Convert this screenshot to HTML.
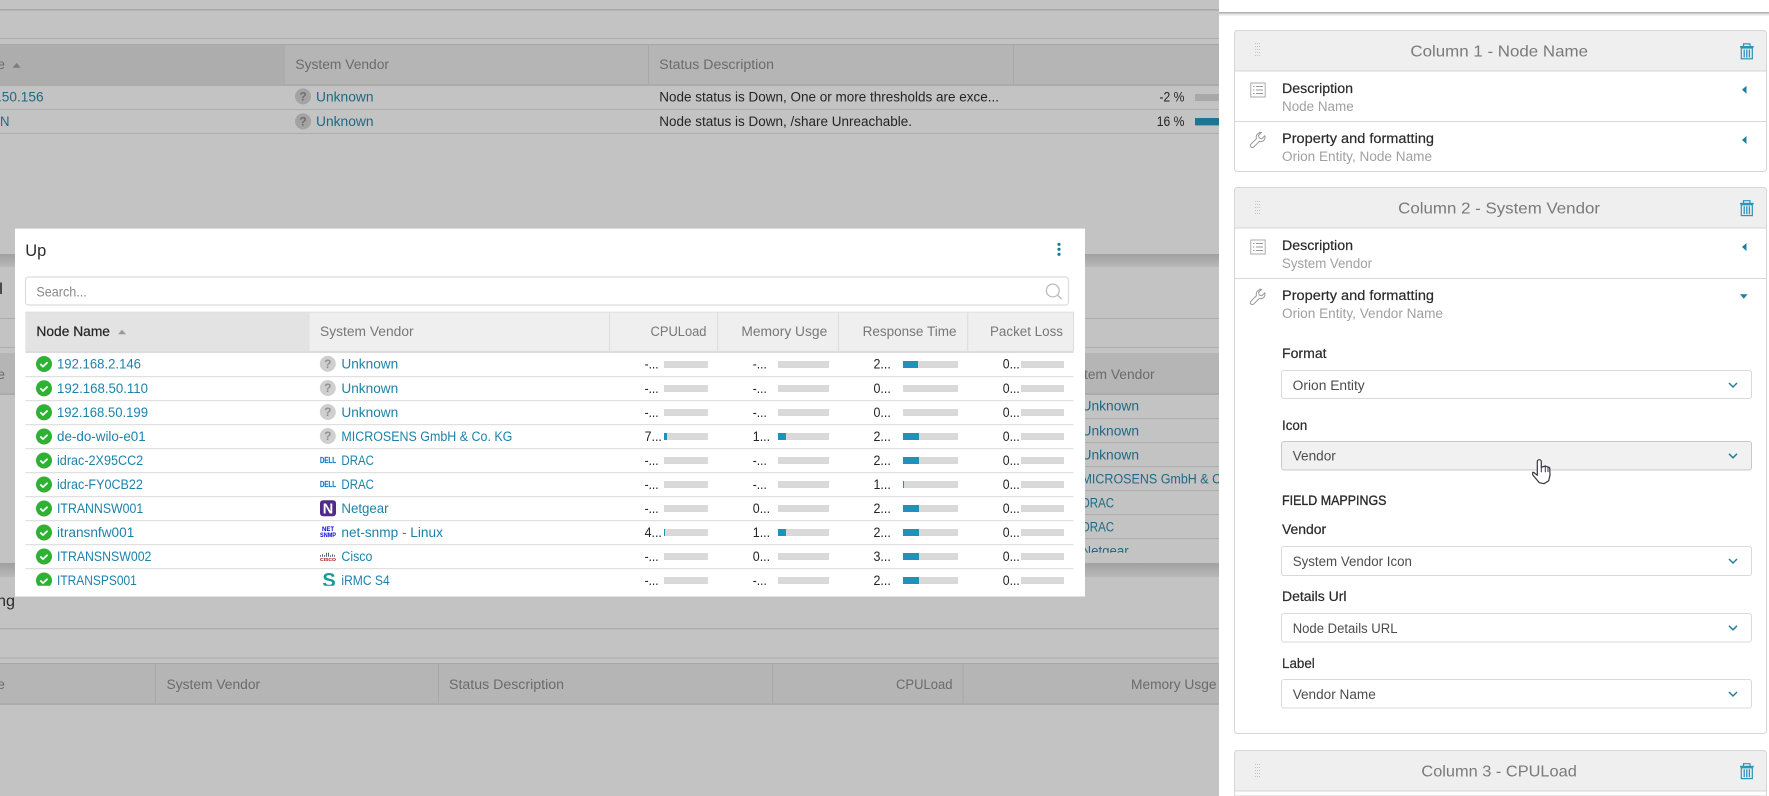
<!DOCTYPE html>
<html><head><meta charset="utf-8"><title>Up</title>
<style>
html,body{margin:0;padding:0;background:#c3c3c3;width:1769px;height:796px;overflow:hidden}
svg{display:block;position:absolute;left:0;top:0}
text{font-family:"Liberation Sans",sans-serif;font-size:13.5px}
.h{fill:#6b6b6b}.bl{fill:#1d6a85}.bt{fill:#242424}
.dh{fill:#777}.l{fill:#1d82aa}.n{fill:#2a2a2a;stroke:#2a2a2a;stroke-width:.2px}.k{fill:#242424}.s{fill:#a0a0a0}.o{fill:#4d4d4d}.t{font-size:15.8px;fill:#7a7a7a}
.q{font-weight:700;font-size:12px;text-anchor:middle}
</style></head><body>
<svg width="1769" height="796" viewBox="0 0 1769 796" xmlns="http://www.w3.org/2000/svg">
<rect width="1769" height="796" fill="#c3c3c3"/>
<!-- background: top widget -->
<rect x="0" y="9" width="1219" height="1.6" fill="#a9a9a9"/>
<rect x="0" y="38" width="1219" height="1" fill="#adadad"/>
<rect x="0" y="44" width="1219" height="40" fill="#b5b5b5"/>
<rect x="0" y="44" width="285" height="40" fill="#adadad"/>
<rect x="0" y="44" width="1219" height="1" fill="#a8a8a8"/>
<rect x="0" y="84" width="1219" height="2" fill="#ababab"/>
<rect x="648" y="44" width="1" height="40" fill="#a8a8a8"/>
<rect x="1013" y="44" width="1" height="40" fill="#a8a8a8"/>
<text class="h" x="-3" y="69" textLength="8" lengthAdjust="spacingAndGlyphs">e</text>
<path d="M12.6 67.7h8l-4-4.7z" fill="#7d7d7d"/>
<text class="h" x="295.4" y="69" textLength="93.6" lengthAdjust="spacingAndGlyphs">System Vendor</text>
<text class="h" x="659.3" y="69" textLength="114.7" lengthAdjust="spacingAndGlyphs">Status Description</text>
<text class="bl" x="-2" y="101.4" textLength="45.6" lengthAdjust="spacingAndGlyphs">.50.156</text>
<circle cx="303" cy="96.4" r="8" fill="#a3a3a3"/><text class="q" x="303" y="100.6" fill="#707070">?</text>
<text class="bl" x="316" y="101.4" textLength="57.5" lengthAdjust="spacingAndGlyphs">Unknown</text>
<text class="bt" x="659.3" y="101.4" textLength="339.7" lengthAdjust="spacingAndGlyphs">Node status is Down, One or more thresholds are exce...</text>
<text class="bt" x="1159.5" y="101.4" textLength="24.9" lengthAdjust="spacingAndGlyphs">-2 %</text>
<rect x="1195" y="94" width="24" height="7" fill="#a8a8a8"/>
<rect x="0" y="109" width="1219" height="1" fill="#adadad"/>
<text class="bl" x="0" y="126.2" textLength="9.5" lengthAdjust="spacingAndGlyphs">N</text>
<circle cx="303" cy="121.4" r="8" fill="#a3a3a3"/><text class="q" x="303" y="125.6" fill="#707070">?</text>
<text class="bl" x="316" y="126.2" textLength="57.5" lengthAdjust="spacingAndGlyphs">Unknown</text>
<text class="bt" x="659.3" y="126.2" textLength="252.7" lengthAdjust="spacingAndGlyphs">Node status is Down, /share Unreachable.</text>
<text class="bt" x="1156.7" y="126.2" textLength="27.7" lengthAdjust="spacingAndGlyphs">16 %</text>
<rect x="1195" y="118" width="24" height="7.4" fill="#1c7693"/>
<rect x="0" y="133" width="1219" height="1" fill="#adadad"/>
<!-- background: middle widget -->
<defs><linearGradient id="b" x1="0" y1="0" x2="0" y2="1"><stop offset="0" stop-color="#a0a0a0"/><stop offset="1" stop-color="#b9b9b9"/></linearGradient></defs>
<rect x="0" y="254" width="1219" height="13" fill="url(#b)"/>
<text x="-1" y="294" style="font-size:16px" fill="#2a2a2a" textLength="4" lengthAdjust="spacingAndGlyphs">l</text>
<rect x="0" y="318" width="1219" height="1" fill="#adadad"/>
<rect x="0" y="347" width="1219" height="1" fill="#adadad"/>
<rect x="0" y="353" width="1219" height="40" fill="#b5b5b5"/>
<rect x="0" y="393" width="1219" height="2" fill="#ababab"/>
<text class="h" x="-3" y="379" textLength="8" lengthAdjust="spacingAndGlyphs">e</text>
<text class="h" x="1061" y="379" textLength="93.6" lengthAdjust="spacingAndGlyphs">System Vendor</text>
<text class="bl" x="1081.5" y="410.5" textLength="57.5" lengthAdjust="spacingAndGlyphs">Unknown</text>
<rect x="1085" y="418" width="134" height="1" fill="#adadad"/>
<text class="bl" x="1081.5" y="435.5" textLength="57.5" lengthAdjust="spacingAndGlyphs">Unknown</text>
<rect x="1085" y="442" width="134" height="1" fill="#adadad"/>
<text class="bl" x="1081.5" y="459.5" textLength="57.5" lengthAdjust="spacingAndGlyphs">Unknown</text>
<rect x="1085" y="466" width="134" height="1" fill="#adadad"/>
<text class="bl" x="1081.5" y="483.5" textLength="171.6" lengthAdjust="spacingAndGlyphs">MICROSENS GmbH &amp; Co. KG</text>
<rect x="1085" y="490" width="134" height="1" fill="#adadad"/>
<text class="bl" x="1081.5" y="507.5" textLength="32.6" lengthAdjust="spacingAndGlyphs">DRAC</text>
<rect x="1085" y="514" width="134" height="1" fill="#adadad"/>
<text class="bl" x="1081.5" y="531.5" textLength="32.6" lengthAdjust="spacingAndGlyphs">DRAC</text>
<rect x="1085" y="538" width="134" height="1" fill="#adadad"/>
<text class="bl" x="1081.5" y="555.5" textLength="47.2" lengthAdjust="spacingAndGlyphs">Netgear</text>
<rect x="1085" y="552.7" width="134" height="11" fill="#c3c3c3"/>
<rect x="0" y="563" width="1219" height="14" fill="url(#b)"/>
<!-- background: bottom widget -->
<text x="-3" y="606" style="font-size:16px" fill="#2a2a2a" textLength="18" lengthAdjust="spacingAndGlyphs">ng</text>
<rect x="0" y="628" width="1219" height="1.4" fill="#adadad"/>
<rect x="0" y="657.5" width="1219" height="1" fill="#adadad"/>
<rect x="0" y="663" width="1219" height="40" fill="#b5b5b5"/>
<rect x="0" y="663" width="1219" height="1" fill="#a8a8a8"/>
<rect x="0" y="703" width="1219" height="2" fill="#ababab"/>
<rect x="155" y="663" width="1" height="40" fill="#a8a8a8"/>
<rect x="438" y="663" width="1" height="40" fill="#a8a8a8"/>
<rect x="772" y="663" width="1" height="40" fill="#a8a8a8"/>
<rect x="962.5" y="663" width="1" height="40" fill="#a8a8a8"/>
<text class="h" x="-3" y="689" textLength="8" lengthAdjust="spacingAndGlyphs">e</text>
<text class="h" x="166.5" y="689" textLength="93.6" lengthAdjust="spacingAndGlyphs">System Vendor</text>
<text class="h" x="449" y="689" textLength="115" lengthAdjust="spacingAndGlyphs">Status Description</text>
<text class="h" x="896" y="689" textLength="56.5" lengthAdjust="spacingAndGlyphs">CPULoad</text>
<text class="h" x="1131" y="689" textLength="85.5" lengthAdjust="spacingAndGlyphs">Memory Usge</text>

<!-- dialog -->
<rect x="15" y="228.6" width="1070" height="368.4" fill="#fff"/>
<rect x="15" y="596" width="1070" height="1" fill="#e2e2e2"/>
<text x="25.3" y="256" style="font-size:16.5px" fill="#2b2b2b" textLength="21" lengthAdjust="spacingAndGlyphs">Up</text>
<circle cx="1059" cy="244.3" r="1.6" fill="#0f7ca0"/><circle cx="1059" cy="249.3" r="1.6" fill="#0f7ca0"/><circle cx="1059" cy="254.3" r="1.6" fill="#0f7ca0"/>
<rect x="25.5" y="277" width="1043" height="28" rx="3" fill="#fff" stroke="#dcdcdc" stroke-width="1.2"/>
<text x="36.4" y="296.3" fill="#8a8a8a" textLength="50.4" lengthAdjust="spacingAndGlyphs">Search...</text>
<circle cx="1052.8" cy="290.5" r="6.4" fill="none" stroke="#bcbcbc" stroke-width="1.3"/><path d="M1057.3 295l4.4 4" stroke="#bcbcbc" stroke-width="1.4" fill="none"/>
<rect x="25.4" y="311.7" width="1048.1" height="39.3" fill="#efefef"/>
<rect x="25.4" y="311.7" width="284.2" height="39.3" fill="#e3e3e3"/>
<rect x="25.4" y="311.7" width="1048.1" height="1" fill="#e0e0e0"/>
<rect x="25.4" y="351" width="1048.1" height="2" fill="#dcdcdc"/>
<rect x="309.4" y="312" width="1" height="39" fill="#ebebeb"/>
<rect x="609" y="312" width="1" height="39" fill="#dcdcdc"/>
<rect x="717.2" y="312" width="1" height="39" fill="#dcdcdc"/>
<rect x="838" y="312" width="1" height="39" fill="#dcdcdc"/>
<rect x="967.2" y="312" width="1" height="39" fill="#dcdcdc"/>
<rect x="1073" y="312" width="1" height="39" fill="#dcdcdc"/>
<text x="36.4" y="336" fill="#242424" stroke="#242424" stroke-width=".2" textLength="73.6" lengthAdjust="spacingAndGlyphs">Node Name</text>
<path d="M118 334.2h8l-4-4.6z" fill="#9a9a9a"/>
<text class="dh" x="320" y="336" textLength="93.6" lengthAdjust="spacingAndGlyphs">System Vendor</text>
<text class="dh" x="650.5" y="336" textLength="56" lengthAdjust="spacingAndGlyphs">CPULoad</text>
<text class="dh" x="741.4" y="336" textLength="85.9" lengthAdjust="spacingAndGlyphs">Memory Usge</text>
<text class="dh" x="862.6" y="336" textLength="93.9" lengthAdjust="spacingAndGlyphs">Response Time</text>
<text class="dh" x="990" y="336" textLength="73" lengthAdjust="spacingAndGlyphs">Packet Loss</text>

<!-- row separators -->
<g fill="#e0e0e0">
<rect x="25.4" y="376" width="1048.1" height="1.2"/><rect x="25.4" y="400" width="1048.1" height="1.2"/><rect x="25.4" y="424" width="1048.1" height="1.2"/><rect x="25.4" y="448" width="1048.1" height="1.2"/><rect x="25.4" y="472" width="1048.1" height="1.2"/><rect x="25.4" y="496" width="1048.1" height="1.2"/><rect x="25.4" y="520" width="1048.1" height="1.2"/><rect x="25.4" y="544" width="1048.1" height="1.2"/><rect x="25.4" y="568" width="1048.1" height="1.2"/>
</g>
<!-- status checks -->
<g fill="#2eb135">
<circle cx="44" cy="364" r="8"/><circle cx="44" cy="388.3" r="8"/><circle cx="44" cy="412.3" r="8"/><circle cx="44" cy="436.5" r="8"/><circle cx="44" cy="460.5" r="8"/><circle cx="44" cy="484.5" r="8"/><circle cx="44" cy="508.5" r="8"/><circle cx="44" cy="532.5" r="8"/><circle cx="44" cy="556.5" r="8"/><circle cx="44" cy="580.5" r="8"/>
</g>
<g fill="none" stroke="#fff" stroke-width="1.7">
<path d="M40.3 364l2.7 2.6 4.6-4.4"/><path d="M40.3 388.3l2.7 2.6 4.6-4.4"/><path d="M40.3 412.3l2.7 2.6 4.6-4.4"/><path d="M40.3 436.5l2.7 2.6 4.6-4.4"/><path d="M40.3 460.5l2.7 2.6 4.6-4.4"/><path d="M40.3 484.5l2.7 2.6 4.6-4.4"/><path d="M40.3 508.5l2.7 2.6 4.6-4.4"/><path d="M40.3 532.5l2.7 2.6 4.6-4.4"/><path d="M40.3 556.5l2.7 2.6 4.6-4.4"/><path d="M40.3 580.5l2.7 2.6 4.6-4.4"/>
</g>
<!-- names -->
<text class="l" x="57" y="368.3" textLength="84" lengthAdjust="spacingAndGlyphs">192.168.2.146</text>
<text class="l" x="57" y="393" textLength="91" lengthAdjust="spacingAndGlyphs">192.168.50.110</text>
<text class="l" x="57" y="417" textLength="91" lengthAdjust="spacingAndGlyphs">192.168.50.199</text>
<text class="l" x="57" y="441" textLength="88.7" lengthAdjust="spacingAndGlyphs">de-do-wilo-e01</text>
<text class="l" x="57" y="465" textLength="86.2" lengthAdjust="spacingAndGlyphs">idrac-2X95CC2</text>
<text class="l" x="57" y="489" textLength="85.9" lengthAdjust="spacingAndGlyphs">idrac-FY0CB22</text>
<text class="l" x="57" y="513" textLength="86.2" lengthAdjust="spacingAndGlyphs">ITRANNSW001</text>
<text class="l" x="57" y="537" textLength="77.3" lengthAdjust="spacingAndGlyphs">itransnfw001</text>
<text class="l" x="57" y="561" textLength="94.4" lengthAdjust="spacingAndGlyphs">ITRANSNSW002</text>
<text class="l" x="57" y="585.2" textLength="79.8" lengthAdjust="spacingAndGlyphs">ITRANSPS001</text>
<!-- vendor icons -->
<g fill="#cfcfcf"><circle cx="327.8" cy="363.7" r="8"/><circle cx="327.8" cy="388" r="8"/><circle cx="327.8" cy="412" r="8"/><circle cx="327.8" cy="436" r="8"/></g>
<g fill="#909090"><text class="q" x="327.8" y="368">?</text><text class="q" x="327.8" y="392.2">?</text><text class="q" x="327.8" y="416.2">?</text><text class="q" x="327.8" y="440.2">?</text></g>
<text x="320" y="463" style="font-size:8px;font-weight:700" fill="#0f7dc2" stroke="#0f7dc2" stroke-width=".2" textLength="16" lengthAdjust="spacingAndGlyphs">DELL</text>
<text x="320" y="487" style="font-size:8px;font-weight:700" fill="#0f7dc2" stroke="#0f7dc2" stroke-width=".2" textLength="16" lengthAdjust="spacingAndGlyphs">DELL</text>
<rect x="320" y="500.3" width="16" height="16" rx="3" fill="#4f2a86"/>
<text x="328" y="513.6" style="font-size:14.5px;font-weight:700;text-anchor:middle" fill="#fff">N</text>
<text x="322" y="531" style="font-size:6.5px;font-weight:700" fill="#0000e0" textLength="12" lengthAdjust="spacingAndGlyphs">NET</text>
<text x="320" y="537" style="font-size:6.5px;font-weight:700" fill="#0000e0" textLength="16" lengthAdjust="spacingAndGlyphs">SNMP</text>
<path d="M320.5 556.7v-1.5M322.5 556.7v-2.5M324.5 556.7v-1.5M326.5 556.7v-4M328.5 556.7v-4M330.5 556.7v-1.5M332.5 556.7v-2.5M334.5 556.7v-1.5" stroke="#4a6a7a" stroke-width="1" fill="none"/>
<text x="320" y="561.2" style="font-size:4.8px;font-weight:700" fill="#a80000" textLength="16" lengthAdjust="spacingAndGlyphs">CISCO</text>
<text x="329" y="587" style="font-size:20px;font-weight:700;text-anchor:middle" fill="#1a9a96">S</text>
<!-- vendors -->
<text class="l" x="341.4" y="368.3" textLength="56.8" lengthAdjust="spacingAndGlyphs">Unknown</text>
<text class="l" x="341.4" y="393" textLength="56.8" lengthAdjust="spacingAndGlyphs">Unknown</text>
<text class="l" x="341.4" y="417" textLength="56.8" lengthAdjust="spacingAndGlyphs">Unknown</text>
<text class="l" x="341.4" y="441" textLength="171" lengthAdjust="spacingAndGlyphs">MICROSENS GmbH &amp; Co. KG</text>
<text class="l" x="341.4" y="465" textLength="32.6" lengthAdjust="spacingAndGlyphs">DRAC</text>
<text class="l" x="341.4" y="489" textLength="32.6" lengthAdjust="spacingAndGlyphs">DRAC</text>
<text class="l" x="341.4" y="513" textLength="47.2" lengthAdjust="spacingAndGlyphs">Netgear</text>
<text class="l" x="341.4" y="537" textLength="101.5" lengthAdjust="spacingAndGlyphs">net-snmp - Linux</text>
<text class="l" x="341.4" y="561" textLength="31" lengthAdjust="spacingAndGlyphs">Cisco</text>
<text class="l" x="341.4" y="585.2" textLength="48.3" lengthAdjust="spacingAndGlyphs">iRMC S4</text>
<!-- bar tracks -->
<g fill="#d9d9d9">
<rect x="664" y="361" width="44" height="7"/><rect x="778" y="361" width="51" height="7"/><rect x="903" y="361" width="55" height="7"/><rect x="1021" y="361" width="43" height="7"/>
<rect x="664" y="385" width="44" height="7"/><rect x="778" y="385" width="51" height="7"/><rect x="903" y="385" width="55" height="7"/><rect x="1021" y="385" width="43" height="7"/>
<rect x="664" y="409" width="44" height="7"/><rect x="778" y="409" width="51" height="7"/><rect x="903" y="409" width="55" height="7"/><rect x="1021" y="409" width="43" height="7"/>
<rect x="664" y="433" width="44" height="7"/><rect x="778" y="433" width="51" height="7"/><rect x="903" y="433" width="55" height="7"/><rect x="1021" y="433" width="43" height="7"/>
<rect x="664" y="457" width="44" height="7"/><rect x="778" y="457" width="51" height="7"/><rect x="903" y="457" width="55" height="7"/><rect x="1021" y="457" width="43" height="7"/>
<rect x="664" y="481" width="44" height="7"/><rect x="778" y="481" width="51" height="7"/><rect x="903" y="481" width="55" height="7"/><rect x="1021" y="481" width="43" height="7"/>
<rect x="664" y="505" width="44" height="7"/><rect x="778" y="505" width="51" height="7"/><rect x="903" y="505" width="55" height="7"/><rect x="1021" y="505" width="43" height="7"/>
<rect x="664" y="529" width="44" height="7"/><rect x="778" y="529" width="51" height="7"/><rect x="903" y="529" width="55" height="7"/><rect x="1021" y="529" width="43" height="7"/>
<rect x="664" y="553" width="44" height="7"/><rect x="778" y="553" width="51" height="7"/><rect x="903" y="553" width="55" height="7"/><rect x="1021" y="553" width="43" height="7"/>
<rect x="664" y="577" width="44" height="7"/><rect x="778" y="577" width="51" height="7"/><rect x="903" y="577" width="55" height="7"/><rect x="1021" y="577" width="43" height="7"/>
</g>
<g fill="#1f92b7">
<rect x="903" y="361" width="15" height="7"/>
<rect x="664" y="433" width="3" height="7"/><rect x="778" y="433" width="8" height="7"/><rect x="903" y="433" width="16" height="7"/>
<rect x="903" y="457" width="16" height="7"/>
<rect x="903" y="481" width="1" height="7"/>
<rect x="903" y="505" width="16" height="7"/>
<rect x="664" y="529" width="1" height="7"/><rect x="778" y="529" width="8" height="7"/><rect x="903" y="529" width="16" height="7"/>
<rect x="903" y="553" width="16" height="7"/>
<rect x="903" y="577" width="16" height="7"/>
</g>
<!-- numeric cells -->
<g class="nums">
<text class="k" x="644.6" y="368.7" textLength="14" lengthAdjust="spacingAndGlyphs">-...</text><text class="k" x="752.8" y="368.7" textLength="14" lengthAdjust="spacingAndGlyphs">-...</text><text class="k" x="873.5" y="368.7" textLength="17.3" lengthAdjust="spacingAndGlyphs">2...</text><text class="k" x="1002.8" y="368.7" textLength="17" lengthAdjust="spacingAndGlyphs">0...</text>
<text class="k" x="644.6" y="393" textLength="14" lengthAdjust="spacingAndGlyphs">-...</text><text class="k" x="752.8" y="393" textLength="14" lengthAdjust="spacingAndGlyphs">-...</text><text class="k" x="873.5" y="393" textLength="17.3" lengthAdjust="spacingAndGlyphs">0...</text><text class="k" x="1002.8" y="393" textLength="17" lengthAdjust="spacingAndGlyphs">0...</text>
<text class="k" x="644.6" y="417" textLength="14" lengthAdjust="spacingAndGlyphs">-...</text><text class="k" x="752.8" y="417" textLength="14" lengthAdjust="spacingAndGlyphs">-...</text><text class="k" x="873.5" y="417" textLength="17.3" lengthAdjust="spacingAndGlyphs">0...</text><text class="k" x="1002.8" y="417" textLength="17" lengthAdjust="spacingAndGlyphs">0...</text>
<text class="k" x="644.6" y="441" textLength="17.3" lengthAdjust="spacingAndGlyphs">7...</text><text class="k" x="752.8" y="441" textLength="17.3" lengthAdjust="spacingAndGlyphs">1...</text><text class="k" x="873.5" y="441" textLength="17.3" lengthAdjust="spacingAndGlyphs">2...</text><text class="k" x="1002.8" y="441" textLength="17" lengthAdjust="spacingAndGlyphs">0...</text>
<text class="k" x="644.6" y="465" textLength="14" lengthAdjust="spacingAndGlyphs">-...</text><text class="k" x="752.8" y="465" textLength="14" lengthAdjust="spacingAndGlyphs">-...</text><text class="k" x="873.5" y="465" textLength="17.3" lengthAdjust="spacingAndGlyphs">2...</text><text class="k" x="1002.8" y="465" textLength="17" lengthAdjust="spacingAndGlyphs">0...</text>
<text class="k" x="644.6" y="489" textLength="14" lengthAdjust="spacingAndGlyphs">-...</text><text class="k" x="752.8" y="489" textLength="14" lengthAdjust="spacingAndGlyphs">-...</text><text class="k" x="873.5" y="489" textLength="17.3" lengthAdjust="spacingAndGlyphs">1...</text><text class="k" x="1002.8" y="489" textLength="17" lengthAdjust="spacingAndGlyphs">0...</text>
<text class="k" x="644.6" y="513" textLength="14" lengthAdjust="spacingAndGlyphs">-...</text><text class="k" x="752.8" y="513" textLength="17.3" lengthAdjust="spacingAndGlyphs">0...</text><text class="k" x="873.5" y="513" textLength="17.3" lengthAdjust="spacingAndGlyphs">2...</text><text class="k" x="1002.8" y="513" textLength="17" lengthAdjust="spacingAndGlyphs">0...</text>
<text class="k" x="644.6" y="537" textLength="17.3" lengthAdjust="spacingAndGlyphs">4...</text><text class="k" x="752.8" y="537" textLength="17.3" lengthAdjust="spacingAndGlyphs">1...</text><text class="k" x="873.5" y="537" textLength="17.3" lengthAdjust="spacingAndGlyphs">2...</text><text class="k" x="1002.8" y="537" textLength="17" lengthAdjust="spacingAndGlyphs">0...</text>
<text class="k" x="644.6" y="561" textLength="14" lengthAdjust="spacingAndGlyphs">-...</text><text class="k" x="752.8" y="561" textLength="17.3" lengthAdjust="spacingAndGlyphs">0...</text><text class="k" x="873.5" y="561" textLength="17.3" lengthAdjust="spacingAndGlyphs">3...</text><text class="k" x="1002.8" y="561" textLength="17" lengthAdjust="spacingAndGlyphs">0...</text>
<text class="k" x="644.6" y="585" textLength="14" lengthAdjust="spacingAndGlyphs">-...</text><text class="k" x="752.8" y="585" textLength="14" lengthAdjust="spacingAndGlyphs">-...</text><text class="k" x="873.5" y="585" textLength="17.3" lengthAdjust="spacingAndGlyphs">2...</text><text class="k" x="1002.8" y="585" textLength="17" lengthAdjust="spacingAndGlyphs">0...</text>
</g>
<rect x="25" y="585.8" width="1050" height="10.2" fill="#fff"/>

<!-- right panel -->
<rect x="1219" y="0" width="550" height="796" fill="#fff"/>
<rect x="1219" y="12" width="550" height="1.6" fill="#b0b0b0"/>
<rect x="1219" y="13.6" width="550" height="2" fill="#e6e6e6"/>

<!-- card 1 -->
<rect x="1234.5" y="30.5" width="532" height="141" rx="3" fill="#fff" stroke="#d6d6d6"/>
<path d="M1234.5 71V33.5a3 3 0 0 1 3-3h526a3 3 0 0 1 3 3V71z" fill="#efefef" stroke="#d6d6d6"/>
<path d="M1255.5 43v15M1257.5 43v15M1259.5 43v15" stroke="#c4c4c4" stroke-width="1" stroke-dasharray="1 2" fill="none"/>
<text class="t" x="1410.4" y="56.3" textLength="177.6" lengthAdjust="spacingAndGlyphs">Column 1 - Node Name</text>
<path d="M1743.5 46.5v-2.6h6.5v2.6" fill="none" stroke="#2a93bb" stroke-width="1.2"/><rect x="1740" y="46" width="13.7" height="1.6" fill="#2a93bb"/><rect x="1741.3" y="48" width="11" height="10.8" fill="none" stroke="#2a93bb" stroke-width="1.2"/><path d="M1744.2 49.5v8M1746.8 49.5v8M1749.4 49.5v8" stroke="#2a93bb" stroke-width="1.3"/>
<rect x="1250.8" y="83" width="14.4" height="14" fill="none" stroke="#aaa" stroke-width="1"/><path d="M1253 86.5h1.4M1253 90h1.4M1253 93.5h1.4M1256 86.5h7M1256 90h7M1256 93.5h7" stroke="#999" stroke-width="1.1" fill="none"/>
<text class="n" x="1282" y="93" textLength="71" lengthAdjust="spacingAndGlyphs">Description</text>
<text class="s" x="1282" y="111" textLength="71.7" lengthAdjust="spacingAndGlyphs">Node Name</text>
<path d="M1746.5 85.7v8l-4.5-4z" fill="#1f7f9f"/>
<rect x="1235" y="121" width="531" height="1" fill="#d9d9d9"/>
<path transform="translate(1250 132)" d="M10.5.8C8.1.8 6.2 2.7 6.2 5c0 .6.1 1.1.3 1.6L.9 12.2c-.8.8-.8 2 0 2.8s2 .8 2.8 0l5.7-5.6c.4.2.9.2 1.4.2 2.4 0 4.2-1.9 4.2-4.3 0-.5-.1-1-.3-1.4l-2.9 2.9-2.6-.8-.7-2.6 2.9-2.9c-.4-.1-.9-.2-1.4-.2z" fill="none" stroke="#999" stroke-width="1"/>
<text class="n" x="1282" y="143" textLength="152" lengthAdjust="spacingAndGlyphs">Property and formatting</text>
<text class="s" x="1282" y="161" textLength="150" lengthAdjust="spacingAndGlyphs">Orion Entity, Node Name</text>
<path d="M1746.5 136v8l-4.5-4z" fill="#1f7f9f"/>

<!-- card 2 -->
<rect x="1234.5" y="187.5" width="532" height="546" rx="3" fill="#fff" stroke="#d6d6d6"/>
<path d="M1234.5 228V190.5a3 3 0 0 1 3-3h526a3 3 0 0 1 3 3V228z" fill="#efefef" stroke="#d6d6d6"/>
<path d="M1255.5 201v15M1257.5 201v15M1259.5 201v15" stroke="#c4c4c4" stroke-width="1" stroke-dasharray="1 2" fill="none"/>
<text class="t" x="1398.2" y="213.5" textLength="201.8" lengthAdjust="spacingAndGlyphs">Column 2 - System Vendor</text>
<path d="M1743.5 203.3v-2.6h6.5v2.6" fill="none" stroke="#2a93bb" stroke-width="1.2"/><rect x="1740" y="202.8" width="13.7" height="1.6" fill="#2a93bb"/><rect x="1741.3" y="204.8" width="11" height="10.8" fill="none" stroke="#2a93bb" stroke-width="1.2"/><path d="M1744.2 206.3v8M1746.8 206.3v8M1749.4 206.3v8" stroke="#2a93bb" stroke-width="1.3"/>
<rect x="1250.8" y="240" width="14.4" height="14" fill="none" stroke="#aaa" stroke-width="1"/><path d="M1253 243.5h1.4M1253 247h1.4M1253 250.5h1.4M1256 243.5h7M1256 247h7M1256 250.5h7" stroke="#999" stroke-width="1.1" fill="none"/>
<text class="n" x="1282" y="250" textLength="71" lengthAdjust="spacingAndGlyphs">Description</text>
<text class="s" x="1282" y="268" textLength="90" lengthAdjust="spacingAndGlyphs">System Vendor</text>
<path d="M1746.5 243v8l-4.5-4z" fill="#1f7f9f"/>
<rect x="1235" y="278" width="531" height="1" fill="#d9d9d9"/>
<path transform="translate(1250 289)" d="M10.5.8C8.1.8 6.2 2.7 6.2 5c0 .6.1 1.1.3 1.6L.9 12.2c-.8.8-.8 2 0 2.8s2 .8 2.8 0l5.7-5.6c.4.2.9.2 1.4.2 2.4 0 4.2-1.9 4.2-4.3 0-.5-.1-1-.3-1.4l-2.9 2.9-2.6-.8-.7-2.6 2.9-2.9c-.4-.1-.9-.2-1.4-.2z" fill="none" stroke="#999" stroke-width="1"/>
<text class="n" x="1282" y="300" textLength="152" lengthAdjust="spacingAndGlyphs">Property and formatting</text>
<text class="s" x="1282" y="318" textLength="161" lengthAdjust="spacingAndGlyphs">Orion Entity, Vendor Name</text>
<path d="M1740 294.3h7.6l-3.8 4.5z" fill="#1f7f9f"/>

<text class="n" x="1282" y="358" textLength="44.6" lengthAdjust="spacingAndGlyphs">Format</text>
<rect x="1281.5" y="370.5" width="470" height="28" rx="2.5" fill="#fff" stroke="#d9d9d9"/>
<text class="o" x="1292.7" y="390" textLength="72" lengthAdjust="spacingAndGlyphs">Orion Entity</text>
<path d="M1729 383l4 4 4-4" fill="none" stroke="#1f7f9f" stroke-width="1.5"/>

<text class="n" x="1282" y="430" textLength="25.3" lengthAdjust="spacingAndGlyphs">Icon</text>
<rect x="1281.5" y="441.5" width="470" height="28.5" rx="2.5" fill="#f1f1f1" stroke="#c8c8c8"/>
<text class="o" x="1292.7" y="460.5" textLength="43.1" lengthAdjust="spacingAndGlyphs">Vendor</text>
<path d="M1729 453.8l4 4 4-4" fill="none" stroke="#1f7f9f" stroke-width="1.5"/>

<text class="n" x="1282" y="505" style="stroke-width:.35px" textLength="104.5" lengthAdjust="spacingAndGlyphs">FIELD MAPPINGS</text>
<text class="n" x="1282" y="534" textLength="44.2" lengthAdjust="spacingAndGlyphs">Vendor</text>
<rect x="1281.5" y="546.5" width="470" height="29" rx="2.5" fill="#fff" stroke="#d9d9d9"/>
<text class="o" x="1292.7" y="566" textLength="119.3" lengthAdjust="spacingAndGlyphs">System Vendor Icon</text>
<path d="M1729 559l4 4 4-4" fill="none" stroke="#1f7f9f" stroke-width="1.5"/>

<text class="n" x="1282" y="601" textLength="64.5" lengthAdjust="spacingAndGlyphs">Details Url</text>
<rect x="1281.5" y="613.5" width="470" height="28.5" rx="2.5" fill="#fff" stroke="#d9d9d9"/>
<text class="o" x="1292.7" y="633" textLength="104.8" lengthAdjust="spacingAndGlyphs">Node Details URL</text>
<path d="M1729 625.8l4 4 4-4" fill="none" stroke="#1f7f9f" stroke-width="1.5"/>

<text class="n" x="1282" y="668" textLength="32.8" lengthAdjust="spacingAndGlyphs">Label</text>
<rect x="1281.5" y="679.5" width="470" height="28.5" rx="2.5" fill="#fff" stroke="#d9d9d9"/>
<text class="o" x="1292.7" y="699" textLength="83.1" lengthAdjust="spacingAndGlyphs">Vendor Name</text>
<path d="M1729 692l4 4 4-4" fill="none" stroke="#1f7f9f" stroke-width="1.5"/>

<!-- cursor -->
<path d="M1537.3 472.7V461.7a2 2 0 0 1 4 0v5.6l4-1.3 4.4 1.7.3 7.3-1.3 5.7-4.7 3-4.7-1-6.6-8v-2.4l1-.0 3.6 3z" fill="#fff" stroke="#333344" stroke-width="1.2" stroke-linejoin="round"/>
<path d="M1541.3 467.3v5M1545.3 466.2v6M1548 467v5" fill="none" stroke="#333344" stroke-width="1"/>

<!-- card 3 -->
<path d="M1234.5 796V753.5a3 3 0 0 1 3-3h526a3 3 0 0 1 3 3V796z" fill="#fff" stroke="#d6d6d6"/>
<path d="M1234.5 791V753.5a3 3 0 0 1 3-3h526a3 3 0 0 1 3 3V791z" fill="#efefef" stroke="#d6d6d6"/>
<path d="M1255.5 764v15M1257.5 764v15M1259.5 764v15" stroke="#c4c4c4" stroke-width="1" stroke-dasharray="1 2" fill="none"/>
<text class="t" x="1421.4" y="776.6" textLength="155.4" lengthAdjust="spacingAndGlyphs">Column 3 - CPULoad</text>
<path d="M1743.5 766.3v-2.6h6.5v2.6" fill="none" stroke="#2a93bb" stroke-width="1.2"/><rect x="1740" y="765.8" width="13.7" height="1.6" fill="#2a93bb"/><rect x="1741.3" y="767.8" width="11" height="10.8" fill="none" stroke="#2a93bb" stroke-width="1.2"/><path d="M1744.2 769.3v8M1746.8 769.3v8M1749.4 769.3v8" stroke="#2a93bb" stroke-width="1.3"/>
</svg>
</body></html>
